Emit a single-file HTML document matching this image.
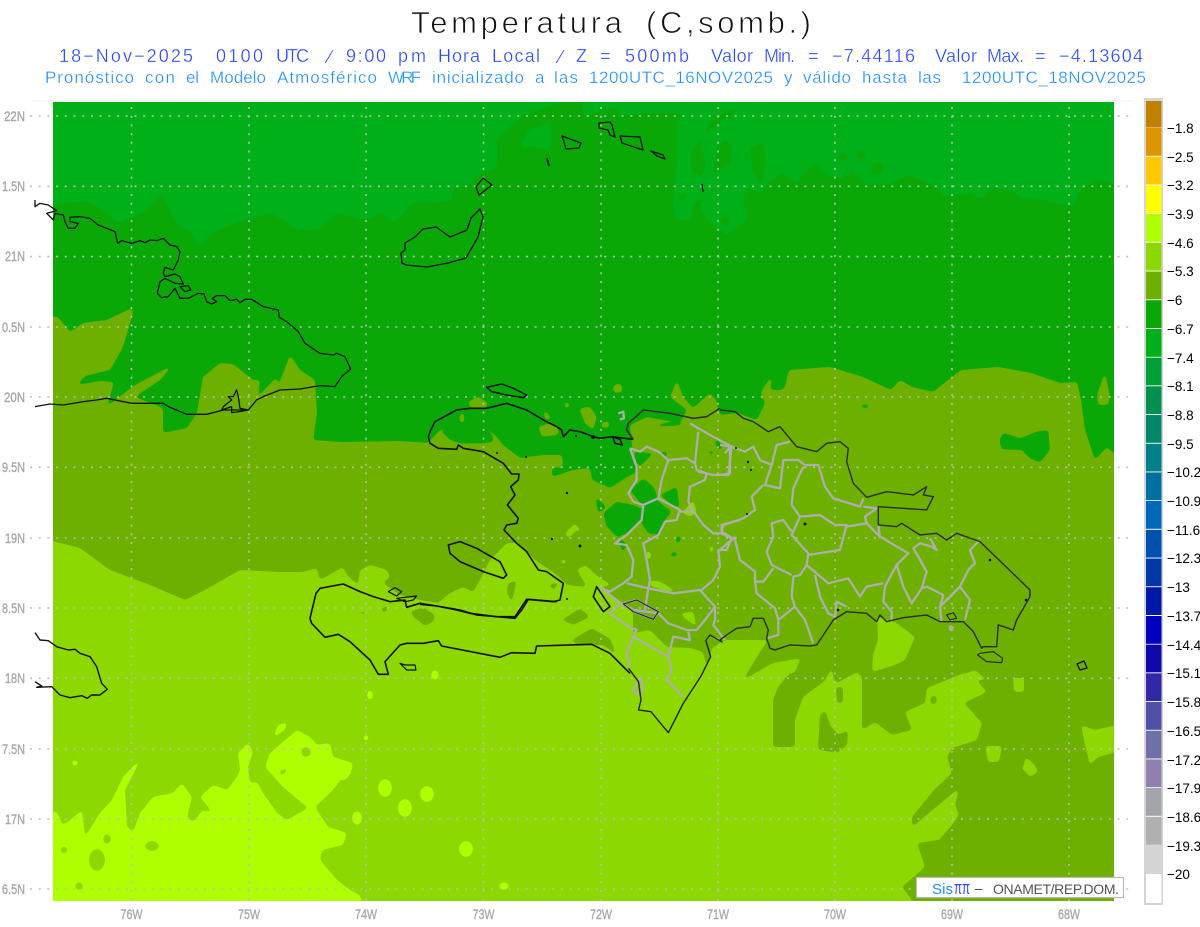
<!DOCTYPE html>
<html lang="es"><head><meta charset="utf-8"><title>Temperatura</title>
<style>
html,body{margin:0;padding:0;background:#fff;width:1200px;height:927px;overflow:hidden}
svg{display:block}
text{font-family:"Liberation Sans",sans-serif}
.c{fill:none;stroke:#111;stroke-width:1.3;stroke-linejoin:round;vector-effect:non-scaling-stroke}
.c *{fill:none;vector-effect:non-scaling-stroke}
.p *{fill:none;stroke:#aeaeae;stroke-width:2.3;stroke-linejoin:round;vector-effect:non-scaling-stroke}
.l2 text{fill:#2a46ff;font-size:18px;stroke:#fff;stroke-width:.3}
.l3 text{fill:#1890ff;font-size:17px;stroke:#fff;stroke-width:.3}
.lat text{fill:#aaa;font-size:14px;text-anchor:end;stroke:#aaa;stroke-width:.4}
.lon text{fill:#aaa;font-size:14px;text-anchor:middle;stroke:#aaa;stroke-width:.4}
.leg text{fill:#000;font-size:13.5px}
.tt{fill:#111;stroke:#fff;stroke-width:.8;font-size:31px}
</style></head><body>
<svg width="1200" height="927" viewBox="0 0 1200 927" xmlns="http://www.w3.org/2000/svg">
<defs>
<filter id="s" filterUnits="userSpaceOnUse" x="0" y="70" width="1200" height="860" color-interpolation-filters="sRGB">
<feGaussianBlur stdDeviation="1.9"/>
<feComponentTransfer><feFuncA type="linear" slope="10" intercept="-4.5"/></feComponentTransfer>
</filter>
<clipPath id="mc"><rect x="53" y="102" width="1061" height="799"/></clipPath>
</defs>
<rect width="1200" height="927" fill="#fff"/>
<text class="tt" x="411" y="33" textLength="211">Temperatura</text>
<text class="tt" x="646" y="33" textLength="165">(C,somb.)</text>
<g class="l2">
<text x="59" y="62" textLength="134">18−Nov−2025</text>
<text x="216" y="62" textLength="47">0100</text>
<text x="276" y="62" textLength="33">UTC</text>
<text transform="translate(327 63) skewX(-18)" text-anchor="middle" font-size="19">/</text>
<text x="346" y="62" textLength="40">9:00</text>
<text x="398" y="62" textLength="28">pm</text>
<text x="438" y="62" textLength="42">Hora</text>
<text x="492" y="62" textLength="48">Local</text>
<text transform="translate(558 63) skewX(-18)" text-anchor="middle" font-size="19">/</text>
<text x="576" y="62">Z</text>
<text x="600" y="62">=</text>
<text x="625" y="62" textLength="64">500mb</text>
<text x="711" y="62" textLength="42">Valor</text>
<text x="764" y="62" textLength="31">Min.</text>
<text x="808" y="62">=</text>
<text x="832" y="62" textLength="83">−7.44116</text>
<text x="935" y="62" textLength="42">Valor</text>
<text x="987" y="62" textLength="37">Max.</text>
<text x="1035" y="62">=</text>
<text x="1059" y="62" textLength="84">−4.13604</text>
</g>
<g class="l3">
<text x="45" y="83" textLength="89">Pronóstico</text>
<text x="145" y="83" textLength="30">con</text>
<text x="186" y="83" textLength="13">el</text>
<text x="210" y="83" textLength="56">Modelo</text>
<text x="277" y="83" textLength="100">Atmosférico</text>
<text x="388" y="83" textLength="33">WRF</text>
<text x="432" y="83" textLength="92">inicializado</text>
<text x="535" y="83">a</text>
<text x="554" y="83" textLength="24">las</text>
<text x="589" y="83" textLength="184">1200UTC_16NOV2025</text>
<text x="784" y="83">y</text>
<text x="803" y="83" textLength="48">válido</text>
<text x="862" y="83" textLength="45">hasta</text>
<text x="918" y="83" textLength="23">las</text>
<text x="962" y="83" textLength="184">1200UTC_18NOV2025</text>
</g>

<rect x="33" y="100.5" width="1100" height="1" fill="#f0f0f0"/>
<g clip-path="url(#mc)">
<rect x="53" y="102" width="1061" height="799" fill="#0aa807"/>
<!-- lighter top band -->
<g fill="#00b018" filter="url(#s)">
<polygon points="40,90 562,90 562,102 520,117 497,140 497,167 476,176 468,187 452,187 452,200 432,203 413,202 394,222 383,213 364,220 337,213 318,230 298,230 272,213 237,222 213,233 197,247 192,233 180,227 168,207 163,193 147,210 133,217 117,223 103,210 90,202 67,202 40,207"/>
<polygon points="521,150 528,130 550,122 552,140 548,150 530,146"/>
<polygon points="583,90 1130,90 1130,190 1097,178 1081,190 1073,207 1036,198 1023,200 1011,190 990,187 982,200 970,193 945,197 937,187 908,175 891,183 865,185 854,170 842,178 830,177 815,163 805,172 797,183 782,172 768,183 760,193 747,187 743,200 747,220 727,235 710,223 700,207 706,197 694,203 690,220 677,220 673,207 677,167 677,127 682,113 645,113 620,117 616,107 603,110 583,117"/>
</g>
<g fill="#0aa807" filter="url(#s)">
<polygon points="702,137 723,120 739,110 727,110 710,122"/>
<polygon points="690,157 702,150 706,165 702,177 692,172"/>
<polygon points="723,140 731,143 731,163 712,175 716,158"/>
<polygon points="750,147 764,143 766,167 760,187 752,167"/>
<polygon points="842,150 850,158 836,163"/>
<circle cx="877" cy="168" r="6"/><circle cx="861" cy="155" r="5"/><circle cx="725" cy="221" r="5"/><circle cx="682" cy="197" r="4"/>
<polygon points="702,137 702,177 692,172 692,150"/>
</g>
<!-- olive main -->
<g fill="#6eb000" filter="url(#s)">
<polygon points="40,316 58,317 70,332 83,323 107,320 132,308 133,313 123,347 110,370 85,376 77,385 100,381 114,382 107,407 115,400 135,385 173,365 160,380 135,397 163,408 163,433 187,428 197,413 203,377 220,363 233,364 253,380 260,380 258,397 267,387 277,377 278,387 290,355 300,370 315,380 317,413 313,440 340,442 400,441 428,443 440,430 462,427 483,427 495,435 503,445 520,458 543,455 562,455 563,467 552,468 552,477 573,470 590,468 592,480 610,488 627,477 637,472 633,455 630,425 647,417 680,423 687,410 670,397 677,380 683,397 693,408 710,393 716,400 720,415 737,413 757,420 765,403 763,390 782,390 785,387 789,370 830,367 863,377 891,390 900,380 912,387 933,392 961,370 998,367 1031,373 1060,383 1077,382 1081,400 1085,430 1095,460 1107,447 1130,468 1130,915 40,915"/>
<polygon points="1097,395 1105,372 1110,397 1108,405 1098,405"/>
<polygon points="761,392 772,375 770,395 762,400"/>
<circle cx="618" cy="388" r="4.5"/>
<g transform="translate(420 380) scale(.3333)">
<polygon points="145,65 175,50 205,70 195,85 150,82"/>
<polygon points="355,140 390,130 415,145 415,165 365,170"/>
<polygon points="478,85 510,80 530,110 520,150 495,130"/>
<polygon points="370,85 395,115 375,120"/>
<polygon points="120,100 133,100 132,130 118,125"/>
<polygon points="578,23 602,18 605,37 583,39"/>
<polygon points="543,128 567,123 567,142 546,144"/>
<polygon points="433,68 447,66 447,84 435,84"/>
</g>
</g>
<g fill="#0aa807" filter="url(#s)">
<g transform="translate(720 390) scale(.3333)">
<polygon points="838,150 850,128 900,145 950,125 985,120 990,180 960,218 930,205 905,180 845,178"/>
<polygon points="423,43 447,43 447,54 423,54"/>
</g>
<g transform="translate(420 380) scale(.3333)">
<polygon points="525,350 560,380 535,400"/>
<polygon points="550,400 590,365 640,375 665,385 665,415 625,460 590,470 560,440"/>
<polygon points="630,330 670,295 700,320 715,355 665,375"/>
<polygon points="720,345 770,320 780,385 750,370"/>
<polygon points="670,375 710,360 755,395 735,420 715,465 685,460 665,430"/>
<polygon points="590,470 620,490 610,520"/>
<polygon points="640,215 700,220 660,260 650,250"/>
<polygon points="720,215 745,215 735,235"/>
<polygon points="758,517 767,513 774,530 746,530"/>
<polygon points="768,468 782,468 782,487 768,489"/>
<polygon points="886,173 910,200 895,212 886,190"/>
<polygon points="866,211 882,213 880,224 866,224"/>
<polygon points="705,135 775,120 790,135 720,140"/>
<polygon points="60,150 125,135 190,140 215,160 222,185 190,190 120,190 90,180"/>
</g>
</g>
<!-- light green -->
<g fill="#8cd800" filter="url(#s)">
<polygon points="40,538 80,548 110,570 150,585 185,600 205,590 240,570 280,572 303,572 317,568 320,580 343,567 347,575 358,585 360,570 370,565 387,570 390,577 383,583 400,595 420,600 438,603 450,593 463,587 473,592 480,580 490,560 507,543 517,543 535,560 557,575 567,585 587,587 577,570 585,565 600,578 612,585 600,587 623,603 633,613 633,633 650,630 667,647 690,648 703,652 707,668 712,648 725,640 768,640 755,660 743,680 773,663 802,658 778,687 773,700 773,747 795,747 795,720 803,697 830,677 837,683 857,672 862,677 862,730 875,722 892,735 912,730 905,712 925,703 927,688 964,673 972,675 987,692 964,703 982,723 977,740 952,748 947,757 952,773 934,790 912,817 912,827 959,788 955,805 959,815 952,825 939,840 917,843 925,867 902,887 912,900 912,915 40,915"/>
<polygon points="877,617 895,622 915,637 905,660 895,665 872,672 873,655 878,640"/>
<polygon points="650,580 663,583 677,593 663,590 650,586"/>
<polygon points="1081,725 1095,730 1130,722 1130,748 1098,757 1090,765 1085,745"/>
<polygon points="985,746 1002,746 999,762 988,762"/>
<polygon points="1017,765 1022,770 1026,757 1035,765 1038,772 1030,777 1024,770"/>
<polygon points="1013,678 1024,678 1024,692 1014,692"/>
<polygon points="770,670 800,660 795,672 775,680"/>
<polygon points="825,680 832,668 834,680"/>
<polygon points="950,680 975,670 987,680"/>
<g transform="translate(420 380) scale(.3333)">
<polygon points="435,460 465,430 490,460 470,450 445,475"/>
<polygon points="400,470 420,480 410,490"/>
<polygon points="785,400 820,360 830,395 815,410"/>
<polygon points="680,510 695,520 690,540 678,535"/>
<polygon points="865,510 880,490 880,520"/>
<polygon points="705,600 730,610 775,640 730,625"/>
<polygon points="780,700 820,695 830,740 800,720"/>
<circle cx="430" cy="545" r="8"/>
</g>
</g>
<g fill="#6eb000" filter="url(#s)">
<polygon points="836,687 843,687 843,703 837,703"/>
<polygon points="818,748 820,715 825,710 830,725 838,735 848,730 847,745 837,753 820,750"/>
<polygon points="931,696 937,696 936,704 930,704"/>
<g transform="translate(290 520) scale(.3333)">
<polygon points="360,275 400,262 435,285 430,305 405,318 370,290"/>
<polygon points="192,290 230,280 225,270"/>
<polygon points="270,270 300,250 285,280"/>
<polygon points="815,300 870,265 900,290 850,315"/>
<polygon points="845,360 905,325 960,355 980,405 940,375 860,375"/>
<polygon points="655,190 680,180 665,250 650,215"/>
<polygon points="775,195 810,185 790,210"/>
<polygon points="288,470 305,490 292,490"/>
</g>
</g>
<g fill="#b0ff00" filter="url(#s)">
<polygon points="40,808 58,813 62,825 68,822 82,810 85,837 100,813 112,800 123,777 142,757 125,790 127,827 133,832 140,813 153,797 173,793 182,783 192,797 187,817 193,822 203,810 213,813 200,797 213,785 227,790 237,777 240,770 238,753 248,743 253,752 248,767 250,783 257,782 263,793 277,813 287,820 308,808 283,787 265,767 270,753 297,730 310,737 317,745 330,743 333,757 353,763 333,790 315,807 328,827 347,833 343,845 322,850 320,860 337,880 350,890 360,895 365,915 40,915"/>
<polygon points="273,738 278,725 287,722 285,730"/>
<ellipse cx="385" cy="788" rx="7" ry="9"/><ellipse cx="427" cy="794" rx="7" ry="8"/><ellipse cx="405" cy="808" rx="7" ry="9"/><ellipse cx="357" cy="818" rx="5" ry="7"/><ellipse cx="466" cy="849" rx="7" ry="8"/><ellipse cx="504" cy="886" rx="5" ry="4"/><ellipse cx="370" cy="695" rx="3" ry="5"/><ellipse cx="435" cy="675" rx="4" ry="5"/><circle cx="366" cy="738" r="3"/>
<polygon points="345,763 353,765 350,775 342,783"/>
</g>
<g fill="#8cd800" filter="url(#s)">
<ellipse cx="97" cy="860" rx="8" ry="11"/><ellipse cx="152" cy="846" rx="7" ry="5"/><ellipse cx="107" cy="839" rx="4" ry="5"/><circle cx="64" cy="850" r="3.5"/><circle cx="79" cy="886" r="4"/><circle cx="306" cy="752" r="5"/>
<polygon points="280,770 290,768 280,777"/>
</g>
<circle cx="75" cy="763" r="2.5" fill="#b0ff00"/>
</g>
<!-- grid -->
<g stroke="#bdbdbd" stroke-width="1.6" stroke-dasharray="2 6.7" fill="none">
<path d="M30 116H1132M30 186.3H1132M30 256.6H1132M30 327H1132M30 397H1132M30 467.3H1132M30 538H1132M30 608H1132M30 678.3H1132M30 749H1132M30 819H1132M30 889H1132"/>
<path d="M131.5 107V906M249 107V906M366 107V906M483.5 107V906M601 107V906M718 107V906M835 107V906M952 107V906M1069 107V906"/>
</g>
<!-- provinces -->
<g class="p">
<g transform="translate(420 380) scale(.3333)">
<polyline points="630,205 650,260 650,300 625,340 640,365 670,375 665,420 620,465 585,490 620,495 640,540 635,590 610,610 570,635 545,625 600,670 570,700 640,750"/>
<polyline points="630,205 660,215 680,200 715,215 745,240 800,235 825,250 835,155"/>
<polyline points="745,240 725,300 715,355 780,390 770,420 735,425 715,465 670,490 680,540 690,600 685,625 675,690"/>
<polyline points="825,250 830,270 860,280 855,300 810,320 805,365 825,400 850,435 880,460 905,460 905,435 960,420"/>
<polyline points="835,275 880,285 925,285 935,200 870,165 810,130"/>
<polyline points="670,375 715,355"/>
<polyline points="780,395 820,395"/>
<polyline points="905,460 935,475 920,510 895,510 900,560 880,600 845,630"/>
<polyline points="620,610 685,625 760,640 840,630 885,680 885,720 880,735 915,780"/>
<polyline points="600,670 640,690 715,700 745,730 800,750 830,750 855,720 885,680"/>
<polyline points="640,745 650,750 640,770 620,820 630,860"/>
<polyline points="640,770 745,830 755,870 740,900 790,950"/>
<polyline points="745,830 760,770 810,780 805,755"/>
<polyline points="610,670 650,660 715,695 700,718 640,695 610,670"/>
<polyline points="595,100 610,95 612,115 600,118"/>
</g>
<g transform="translate(720 390) scale(.3333)">
<polyline points="0,165 35,170 75,185 100,170 120,210 155,225 170,165 210,155"/>
<polyline points="155,225 135,285 180,295 190,210 235,210 255,225 295,225 315,290 340,325 420,350 430,325"/>
<polyline points="130,285 95,320 105,360 70,385 10,405 5,425 45,450 60,510 105,545 105,575 110,610 165,655 175,690 175,735 140,745"/>
<polyline points="45,440 0,480"/>
<polyline points="15,190 30,170 30,250 0,255"/>
<polyline points="250,230 220,295 215,345 240,380 215,435 265,490 260,525 240,555 220,560 215,620 225,650 255,690 280,760"/>
<polyline points="240,380 300,375 345,405 380,405 360,480 265,495"/>
<polyline points="380,410 440,400 435,380 470,355 430,350"/>
<polyline points="440,400 480,440 565,490 530,525 495,590 490,635 515,665 515,690"/>
<polyline points="480,445 475,405"/>
<polyline points="215,425 190,390 155,400 160,440 140,485 155,525 215,555"/>
<polyline points="160,535 130,575 105,575"/>
<polyline points="260,525 325,580 385,565 420,620 440,590 490,580"/>
<polyline points="285,555 300,620 325,670 345,680 350,635 380,650"/>
<polyline points="225,650 175,690"/>
<polyline points="530,525 550,590 575,640 605,595 620,545 595,500 580,475 600,460 635,470 650,480 630,445"/>
<polyline points="605,595 620,590 670,615 660,650 665,695"/>
<polyline points="670,640 720,590 750,630 735,690"/>
<polyline points="720,590 745,540 765,520 750,480 775,455"/>
<polyline points="660,650 720,590"/>
<polyline points="690,708 698,712 696,720 690,718 690,708"/>
</g>
<polyline points="637,683 641,678 643,690 637,694 633,690 637,683" stroke-width="1.5"/>
</g>
<!-- coasts -->
<g class="c" fill="none">
<g transform="translate(0 180) scale(.3333)">
<polyline points="105,60 105,80 120,70 145,75 170,92 140,100 160,120 165,100 190,105 195,125 205,145 225,145 235,130 210,125 210,112 240,110 270,115 295,135 345,155 353,190 365,182 395,190 420,182 435,188 450,180 470,182 490,175 510,195 530,200 540,215 535,240 520,270 495,262 490,280 495,290 525,282 540,290 550,312 525,310 495,295 480,305 472,340 485,353 505,350 525,325 540,355 565,355 595,340 612,342 620,365 635,372 650,365 637,355 650,347 675,347 690,362 710,358 720,368 735,358 755,358 790,380 835,390 838,412 860,425 895,455 915,490 960,520 1000,525 1010,520 1035,530 1052,567 1025,590 1005,620 960,617 900,627 840,630 790,650 770,660 745,690 720,685 715,650 710,630 700,650 685,650 695,660 670,680 665,690 695,680 695,698 718,695 745,690 670,690 620,703 560,703 505,680 490,670 440,670 395,670 320,655 290,660 250,665 190,675 150,672 105,680"/>
<polygon points="540,320 565,317 572,330 555,335"/>
</g>
<polygon points="477,212 480,209 483,217 478,237 466,258 448,263 427,267 406,265 402,263 401,253 405,250 405,243 415,237 423,229 436,227 450,237 467,230 471,218"/>
<polygon points="476,187 483,178 492,185 479,195"/>
<polygon points="562,136 581,143 579,148 566,149 564,142"/>
<polyline points="547,158 549,166" stroke-width="1.6"/>
<polygon points="599,123 610,122 612,125 615,137 610,135 608,130 599,128"/>
<polygon points="620,136 640,137 643,150 622,143"/>
<polygon points="651,151 663,155 665,159 657,156"/>
<polyline points="702,184 703,192"/>
<polygon points="1077,664 1084,661 1087,668 1080,670"/>
<g transform="translate(0 600) scale(.3333)">
<polyline points="105,98 120,120 145,122 170,140 205,150 225,148 240,160 270,170 290,200 305,250 322,268 300,285 275,285 262,295 245,287 210,293 180,285 155,260 110,262 125,258 105,245" stroke-width="1.4"/>
</g>
<g transform="translate(420 380) scale(.3333)" stroke-width="1.6">
<polygon points="200,22 245,12 280,25 320,45 310,53 260,45 215,35" style="stroke-width:1.5"/>
<polyline points="640,178 575,170 540,175 520,170 480,155 450,150 430,170 425,150 410,140 370,120 320,90 260,70 200,85 150,85 110,90 45,125 30,155 25,170 30,190 55,205 110,208 115,195 130,205 190,215 250,250 275,282 297,282 295,300 272,320 285,345 262,375 295,415 290,430 260,435 252,450 290,490 320,515 355,570 380,575 430,610 420,660 400,665 320,658 285,710 230,710 170,705 120,690 50,678 0,673" style="stroke-width:1.6"/>
<polygon points="85,495 120,485 170,505 240,545 260,585 250,595 190,575 120,545 90,520" style="stroke-width:1.6"/>
<polygon points="530,620 570,680 550,695 520,650"/>
<polygon points="578,170 600,178 607,195 585,190"/>
<polyline points="640,178 620,150 625,130 670,90 750,100 820,115 860,110 900,85" style="stroke:#333"/>
<polygon points="610,672 650,660 715,695 700,718 640,695" style="stroke:#222;stroke-width:1.1"/>
</g>
<g transform="translate(290 520) scale(.3333)" style="stroke-width:1.6">
<polyline points="800,245 715,238 695,270 675,295 620,290 540,280 500,270 440,258 390,250 350,262 345,240 300,245 250,230 210,215 160,192 90,205 78,220 60,295 65,310 105,352 145,343 180,365 240,420 265,463 295,463 285,425 330,375 350,370 400,370 445,362 455,378 630,412 665,398 735,400 740,378 905,373 960,400 1000,440 1020,460" style="stroke-width:1.6"/>
<polygon points="330,430 345,435 375,435 378,450 350,450" style="stroke-width:1.2"/>
<polygon points="295,215 315,203 335,215 320,228" style="stroke-width:1.2"/>
<polygon points="320,235 380,228 370,240 345,245" style="stroke-width:1.2"/>
</g>
<g transform="translate(340 640) scale(.4975 .3333)" style="stroke:#222">
<polyline points="580,85 600,125 605,180 600,210 625,215 650,260 660,278 690,190 725,110 745,50 735,0" style="stroke-width:1.4"/>
</g>
<polyline points="706,640 710,635 722,642 720,640" style="stroke:#222"/>
<g transform="translate(720 390) scale(.3333)" style="stroke:#2c2c2c">
<polyline points="0,750 20,735 50,715 90,710 100,685 130,685 145,720 140,745 150,775 165,780 210,765 270,768 290,765 340,690 380,665 440,670 470,695 480,675 500,695 550,683 620,675 660,695 730,695 760,725 785,775 790,770 830,770 835,705 880,720 890,690 930,620 930,600 780,455 710,430 680,450 650,430 600,435 545,400 530,410 475,405 475,350 620,360 640,320 610,315 620,290 580,315 500,305 440,322 400,280 380,215 385,175 360,155 320,160 290,185 230,170 180,110 145,125 100,95 70,85 45,65 0,60" style="stroke-width:1.4"/>
<polygon points="780,790 820,785 848,805 845,818 800,815 773,795" style="stroke-width:1.2"/>
<polygon points="680,675 700,668 710,685 690,690" style="stroke-width:1.2"/>
</g>
</g>
<!-- specks -->
<g fill="#111">
<circle cx="593" cy="437" r="2"/><circle cx="576" cy="436" r="1"/><circle cx="567" cy="493" r="1.2"/><circle cx="552" cy="539" r="1.2"/><circle cx="580" cy="546" r="1.5"/><circle cx="497" cy="453" r="1"/><circle cx="526" cy="457" r="1"/><circle cx="567" cy="599" r="1"/>
<circle cx="748" cy="462" r="1.2"/><circle cx="736" cy="448" r="1"/><circle cx="751" cy="470" r="1"/><circle cx="805" cy="524" r="1.5"/><circle cx="990" cy="560" r="1.3"/><circle cx="1026" cy="600" r="1.3"/><circle cx="838" cy="610" r="1.3"/><circle cx="747" cy="514" r="1"/>
</g>
<!-- lat / lon labels -->
<g class="lat">
<text x="25" y="121" textLength="21" lengthAdjust="spacingAndGlyphs">22N</text>
<text x="25" y="191" textLength="23" lengthAdjust="spacingAndGlyphs">1.5N</text>
<text x="25" y="261" textLength="20" lengthAdjust="spacingAndGlyphs">21N</text>
<text x="25" y="332" textLength="23" lengthAdjust="spacingAndGlyphs">0.5N</text>
<text x="25" y="402" textLength="21" lengthAdjust="spacingAndGlyphs">20N</text>
<text x="25" y="472" textLength="23" lengthAdjust="spacingAndGlyphs">9.5N</text>
<text x="25" y="543" textLength="20" lengthAdjust="spacingAndGlyphs">19N</text>
<text x="25" y="613" textLength="23" lengthAdjust="spacingAndGlyphs">8.5N</text>
<text x="25" y="683" textLength="20" lengthAdjust="spacingAndGlyphs">18N</text>
<text x="25" y="754" textLength="23" lengthAdjust="spacingAndGlyphs">7.5N</text>
<text x="25" y="824" textLength="20" lengthAdjust="spacingAndGlyphs">17N</text>
<text x="25" y="894" textLength="23" lengthAdjust="spacingAndGlyphs">6.5N</text>
</g>
<g class="lon">
<text x="131.5" y="919" textLength="22" lengthAdjust="spacingAndGlyphs">76W</text>
<text x="249" y="919" textLength="22" lengthAdjust="spacingAndGlyphs">75W</text>
<text x="366" y="919" textLength="22" lengthAdjust="spacingAndGlyphs">74W</text>
<text x="483.5" y="919" textLength="22" lengthAdjust="spacingAndGlyphs">73W</text>
<text x="601" y="919" textLength="22" lengthAdjust="spacingAndGlyphs">72W</text>
<text x="718" y="919" textLength="22" lengthAdjust="spacingAndGlyphs">71W</text>
<text x="835" y="919" textLength="22" lengthAdjust="spacingAndGlyphs">70W</text>
<text x="952" y="919" textLength="22" lengthAdjust="spacingAndGlyphs">69W</text>
<text x="1069" y="919" textLength="22" lengthAdjust="spacingAndGlyphs">68W</text>
</g>
<!-- logo box -->
<rect x="916.5" y="877.5" width="207" height="20" fill="#fff" stroke="#bbb" stroke-width="1.2"/>
<text x="932" y="894" font-size="15" fill="#1890ff" textLength="21">Sis</text>
<text x="954" y="894" font-size="18" fill="#2a46ff" textLength="16" lengthAdjust="spacingAndGlyphs">ππ</text>
<text x="974" y="894" font-size="14" fill="#444" textLength="9" lengthAdjust="spacingAndGlyphs">−</text>
<text x="993" y="894" font-size="14" fill="#555" textLength="126">ONAMET/REP.DOM.</text>
<!-- legend -->
<rect x="1144" y="98" width="19" height="807" fill="#d4d4d4"/>
<rect x="1146" y="101" width="15.5" height="802" fill="#fff"/>
<g>
<rect x="1146" y="101" width="15.5" height="26.6" fill="#c08000"/>
<rect x="1146" y="128" width="15.5" height="27.8" fill="#de9600"/>
<rect x="1146" y="156.7" width="15.5" height="27.8" fill="#ffc800"/>
<rect x="1146" y="185.4" width="15.5" height="27.8" fill="#ffff00"/>
<rect x="1146" y="214" width="15.5" height="27.8" fill="#b0ff00"/>
<rect x="1146" y="242.8" width="15.5" height="27.8" fill="#8cd800"/>
<rect x="1146" y="271.5" width="15.5" height="27.8" fill="#6eb000"/>
<rect x="1146" y="300.2" width="15.5" height="27.8" fill="#0aa807"/>
<rect x="1146" y="329" width="15.5" height="27.8" fill="#00b018"/>
<rect x="1146" y="357.6" width="15.5" height="27.8" fill="#00a038"/>
<rect x="1146" y="386.3" width="15.5" height="27.8" fill="#009050"/>
<rect x="1146" y="415" width="15.5" height="27.8" fill="#008868"/>
<rect x="1146" y="443.7" width="15.5" height="27.8" fill="#008088"/>
<rect x="1146" y="472.4" width="15.5" height="27.8" fill="#0070a0"/>
<rect x="1146" y="501" width="15.5" height="27.8" fill="#0068b8"/>
<rect x="1146" y="529.8" width="15.5" height="27.8" fill="#0050b0"/>
<rect x="1146" y="558.5" width="15.5" height="27.8" fill="#0038a8"/>
<rect x="1146" y="587.2" width="15.5" height="27.8" fill="#0018a8"/>
<rect x="1146" y="616" width="15.5" height="27.8" fill="#0000c0"/>
<rect x="1146" y="644.6" width="15.5" height="27.8" fill="#1008a8"/>
<rect x="1146" y="673.3" width="15.5" height="27.8" fill="#3028a8"/>
<rect x="1146" y="702" width="15.5" height="27.8" fill="#5050a8"/>
<rect x="1146" y="730.7" width="15.5" height="27.8" fill="#7070a8"/>
<rect x="1146" y="759.4" width="15.5" height="27.8" fill="#9080b0"/>
<rect x="1146" y="788" width="15.5" height="27.8" fill="#a4a4ac"/>
<rect x="1146" y="816.8" width="15.5" height="28" fill="#b0b0b0"/>
<rect x="1146" y="845" width="15.5" height="29" fill="#d4d4d4"/>
</g>
<g class="leg">
<text x="1167" y="133">−1.8</text><text x="1167" y="162">−2.5</text><text x="1167" y="190">−3.2</text><text x="1167" y="219">−3.9</text><text x="1167" y="248">−4.6</text><text x="1167" y="276">−5.3</text><text x="1167" y="305">−6</text><text x="1167" y="334">−6.7</text><text x="1167" y="363">−7.4</text><text x="1167" y="391">−8.1</text><text x="1167" y="420">−8.8</text><text x="1167" y="449">−9.5</text><text x="1167" y="477">−10.2</text><text x="1167" y="506">−10.9</text><text x="1167" y="535">−11.6</text><text x="1167" y="563">−12.3</text><text x="1167" y="592">−13</text><text x="1167" y="621">−13.7</text><text x="1167" y="650">−14.4</text><text x="1167" y="678">−15.1</text><text x="1167" y="707">−15.8</text><text x="1167" y="736">−16.5</text><text x="1167" y="765">−17.2</text><text x="1167" y="793">−17.9</text><text x="1167" y="822">−18.6</text><text x="1167" y="851">−19.3</text><text x="1167" y="879">−20</text>
</g>
</svg>
</body></html>
